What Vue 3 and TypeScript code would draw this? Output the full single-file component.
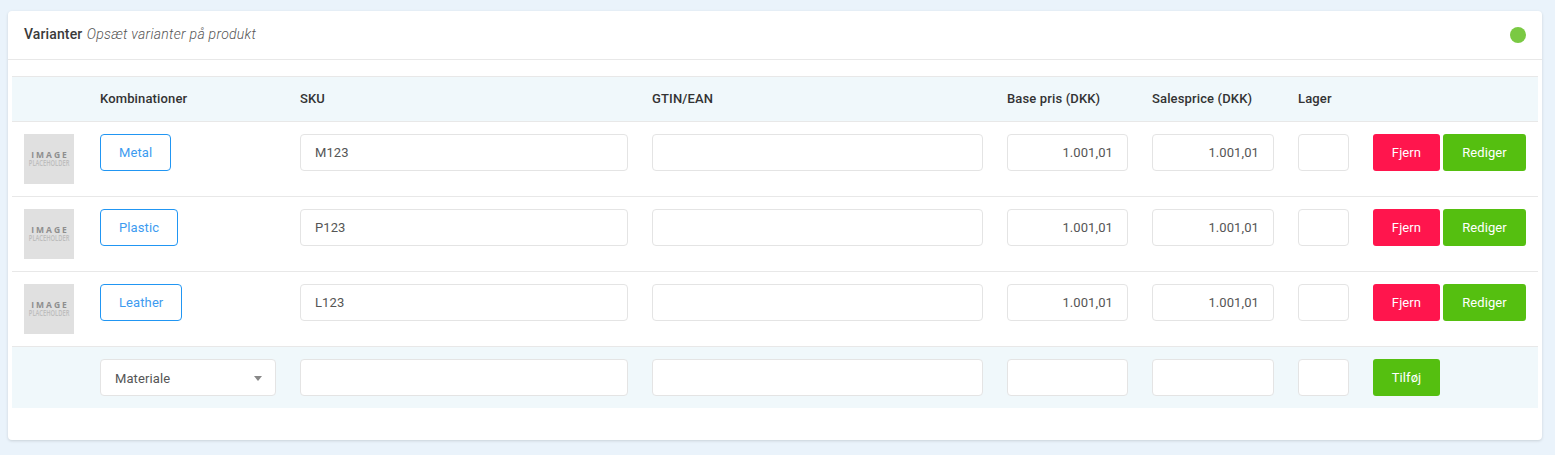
<script setup lang="ts">
interface Variant { name: string; sku: string; base: string; sale: string }
const variants: Variant[] = [
  { name: 'Metal', sku: 'M123', base: '1.001,01', sale: '1.001,01' },
  { name: 'Plastic', sku: 'P123', base: '1.001,01', sale: '1.001,01' },
  { name: 'Leather', sku: 'L123', base: '1.001,01', sale: '1.001,01' },
]
</script>

<template>
  <div class="page">
    <section class="card">
      <header class="head">
        <div class="title"><strong>Varianter</strong> <em>Opsæt varianter på produkt</em></div>
        <span class="dot"></span>
      </header>
      <div class="body">
        <table>
          <colgroup>
            <col style="width:76px" /><col style="width:200px" /><col style="width:352px" /><col style="width:355px" />
            <col style="width:145px" /><col style="width:146px" /><col style="width:75px" /><col style="width:177px" />
          </colgroup>
          <thead>
            <tr>
              <th></th><th>Kombinationer</th><th>SKU</th><th>GTIN/EAN</th>
              <th>Base pris (DKK)</th><th>Salesprice (DKK)</th><th>Lager</th><th></th>
            </tr>
          </thead>
          <tbody>
            <tr v-for="v in variants" :key="v.sku">
              <td>
                <div class="thumb"><span class="t1">IMAGE</span><span class="t2">PLACEHOLDER</span></div>
              </td>
              <td><button class="chip">{{ v.name }}</button></td>
              <td><input class="field" :value="v.sku" /></td>
              <td><input class="field" /></td>
              <td><input class="field num" :value="v.base" /></td>
              <td><input class="field num" :value="v.sale" /></td>
              <td><input class="field" /></td>
              <td>
                <div class="actions">
                  <button class="btn red">Fjern</button>
                  <button class="btn green wide">Rediger</button>
                </div>
              </td>
            </tr>
            <tr class="add">
              <td></td>
              <td>
                <div class="select">Materiale<span class="caret"></span></div>
              </td>
              <td><input class="field" /></td>
              <td><input class="field" /></td>
              <td><input class="field" /></td>
              <td><input class="field" /></td>
              <td><input class="field" /></td>
              <td><div class="actions"><button class="btn green">Tilføj</button></div></td>
            </tr>
          </tbody>
        </table>
      </div>
    </section>
  </div>
</template>

<style>
html, body { margin: 0; background: #eaf3fb; }
</style>

<style scoped>
.page {
  box-sizing: border-box;
  height: 455px;
  padding: 11px 13px 15px 8px;
  background: #eaf3fb;
  font-family: Roboto, "Liberation Sans", sans-serif;
  font-size: 13px;
  color: #555;
}
.card {
  box-sizing: border-box;
  height: 429px;
  background: #fff;
  border-radius: 4px;
  box-shadow: 0 1px 3px rgba(0, 0, 0, 0.14);
}
.head {
  box-sizing: border-box;
  height: 49px;
  padding: 0 16px;
  border-bottom: 1px solid #e8e8e8;
  display: flex;
  align-items: center;
  justify-content: space-between;
  font-size: 14px;
}
.title { margin-bottom: 2px; }
.head strong { font-weight: 500; color: #3a3a3a; letter-spacing: 0.12px; }
.head em { color: #555; font-weight: 300; margin-left: 1px; letter-spacing: 0.28px; }
.dot { width: 16px; height: 16px; border-radius: 50%; background: #7ac943; }
.body { padding: 16px 4px 0; }
table {
  width: 1526px;
  table-layout: fixed;
  border-collapse: collapse;
}
th {
  height: 42px;
  padding: 0 12px 2px;
  text-align: left;
  font-size: 13px;
  font-weight: 500;
  letter-spacing: 0.14px;
  color: #333;
  background: #f0f8fb;
  border-top: 1px solid #e8e8e8;
  border-bottom: 1px solid #e8e8e8;
  white-space: nowrap;
}
td {
  padding: 12px;
  vertical-align: top;
  border-bottom: 1px solid #e8e8e8;
  height: 50px;
}
.add td { background: #f0f8fb; border-bottom: 0; height: 37px; }
.thumb {
  width: 50px;
  height: 50px;
  background: #e0e0e0;
  color: #8e8e8e;
  display: flex;
  flex-direction: column;
  align-items: center;
  justify-content: center;
  line-height: 1;
  font-family: "Open Sans", "Liberation Sans", sans-serif;
  white-space: nowrap;
}
.t1 { font-size: 8.5px; font-weight: 700; letter-spacing: 2px; margin-right: -2px; }
.t2 { font-size: 8px; color: #bdbdbd; margin-top: 0; font-weight: 600; transform: scaleX(0.72); }
.chip {
  box-sizing: border-box;
  height: 37px;
  padding: 0 18px;
  background: #fff;
  border: 1px solid #2196f3;
  border-radius: 4px;
  color: #3d9bf0;
  font: 13px Roboto, sans-serif;
  letter-spacing: 0.1px;
}
.field, .select {
  box-sizing: border-box;
  display: block;
  width: 100%;
  height: 37px;
  padding: 0 14px;
  background: #fff;
  border: 1px solid #e4e4e4;
  border-radius: 4px;
  color: #555;
  font: 13px Roboto, sans-serif;
  letter-spacing: 0.1px;
  outline: none;
}
.num { text-align: right; }
.select {
  position: relative;
  line-height: 37px;
}
.caret {
  position: absolute;
  right: 13px;
  top: 16px;
  border-left: 4px solid transparent;
  border-right: 4px solid transparent;
  border-top: 5px solid #888;
}
.actions { display: flex; gap: 3px; }
.btn {
  box-sizing: border-box;
  width: 67px;
  height: 37px;
  padding: 0;
  border: 0;
  border-radius: 3px;
  color: #fff;
  font: 13px Roboto, sans-serif;
  letter-spacing: 0.1px;
}
.wide { width: 83px; }
.red { background: #ff154d; }
.green { background: #55bf10; }
</style>
